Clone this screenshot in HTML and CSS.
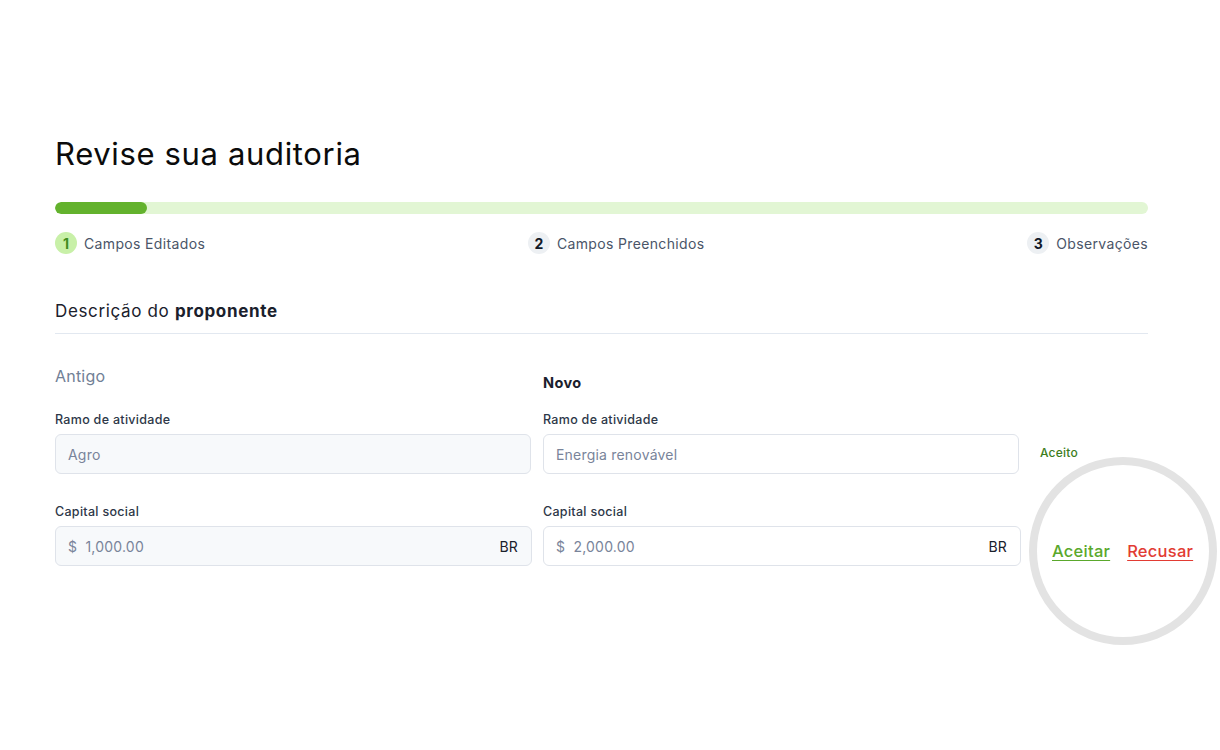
FILE: index.html
```html
<!DOCTYPE html>
<html lang="pt-BR">
<head>
<meta charset="utf-8">
<title>Revise sua auditoria</title>
<link rel="stylesheet" href="styles.css">
</head>
<body>
<main class="page">
  <h1 class="title">Revise sua auditoria</h1>
  <div class="progress"><div class="progress-fill"></div></div>
  <ol class="steps">
    <li class="step active"><span class="step-num">1</span><span class="step-label">Campos Editados</span></li>
    <li class="step"><span class="step-num">2</span><span class="step-label">Campos Preenchidos</span></li>
    <li class="step"><span class="step-num">3</span><span class="step-label">Observações</span></li>
  </ol>
  <h2 class="section-title">Descrição do <strong>proponente</strong></h2>
  <div class="compare">
    <div class="col-head old">Antigo</div>
    <div class="col-head new">Novo</div>
    <div class="col-head"></div>

    <div class="field">
      <label class="field-label">Ramo de atividade</label>
      <div class="input readonly narrow"><span class="value">Agro</span></div>
    </div>
    <div class="field">
      <label class="field-label">Ramo de atividade</label>
      <div class="input narrow"><span class="value">Energia renovável</span></div>
    </div>
    <div class="status"><span class="accepted">Aceito</span></div>

    <div class="field second">
      <label class="field-label">Capital social</label>
      <div class="input readonly"><span class="value">$&nbsp; 1,000.00</span><span class="suffix">BR</span></div>
    </div>
    <div class="field second">
      <label class="field-label">Capital social</label>
      <div class="input"><span class="value">$&nbsp; 2,000.00</span><span class="suffix">BR</span></div>
    </div>
    <div class="status second">
      <div class="actions">
        <a class="action accept" href="#">Aceitar</a>
        <a class="action reject" href="#">Recusar</a>
      </div>
    </div>
  </div>
</main>
</body>
</html>
```
FILE: styles.css
```css
*, *::before, *::after { box-sizing: border-box; }
html, body { margin: 0; padding: 0; background: #ffffff; }
body {
  font-family: "Inter", "Open Sans", "Liberation Sans", sans-serif;
  color: #1a202c;
  width: 1220px;
  height: 750px;
  overflow: hidden;
}
.page {
  padding: 134px 72px 0 55px;
}
.title {
  margin: 0;
  font-size: 31px;
  line-height: 40px;
  font-weight: 400;
  color: #0b0b0b;
  letter-spacing: 0.65px;
}
.progress {
  margin-top: 28px;
  height: 12px;
  border-radius: 6px;
  background: #e2f6d4;
  overflow: hidden;
}
.progress-fill {
  width: 92px;
  height: 100%;
  border-radius: 6px;
  background: #63b22d;
}
.steps {
  list-style: none;
  margin: 18px 0 0;
  padding: 0;
  display: flex;
  justify-content: space-between;
  height: 22px;
}
.step {
  display: flex;
  align-items: center;
  gap: 7px;
}
.step-num {
  width: 22px;
  height: 22px;
  border-radius: 50%;
  background: #edf0f3;
  color: #111827;
  font-weight: 700;
  font-size: 14px;
  display: flex;
  align-items: center;
  justify-content: center;
}
.step.active .step-num {
  background: #c8f0a8;
  color: #3f8d1e;
}
.step-label {
  font-size: 14px;
  color: #4a5568;
  letter-spacing: 0.35px;
}
.section-title {
  margin: 45px 0 0;
  padding-bottom: 10px;
  border-bottom: 1px solid #e2e8f0;
  font-size: 17px;
  line-height: 24px;
  font-weight: 400;
  color: #1a202c;
  letter-spacing: 0.65px;
}
.section-title strong { font-weight: 700; }
.compare {
  display: grid;
  grid-template-columns: 477px 478px 1fr;
  grid-template-rows: 77px auto auto;
  column-gap: 11px;
}
.col-head.old {
  margin-top: 31px;
  font-size: 16px;
  line-height: 22px;
  color: #718096;
  letter-spacing: 0.2px;
}
.col-head.new {
  margin-top: 39px;
  font-size: 14.5px;
  line-height: 20px;
  font-weight: 700;
  color: #1a202c;
  letter-spacing: 0.4px;
}
.field { display: flex; flex-direction: column; }
.field.second { margin-top: 29px; }
.field-label {
  font-size: 12.5px;
  line-height: 18px;
  font-weight: 500;
  color: #2d3748;
  margin-bottom: 5px;
  letter-spacing: 0.3px;
}
.input {
  height: 40px;
  border: 1px solid #dfe3ea;
  border-radius: 6px;
  background: #ffffff;
  display: flex;
  align-items: center;
  justify-content: space-between;
  padding: 0 13px 0 12px;
  font-size: 14px;
  letter-spacing: 0.2px;
}
.input.narrow { width: 476px; }
.input.readonly { background: #f7f9fb; }
.value { color: #79849a; }
.suffix { color: #1a202c; }
.status {
  padding-top: 30px;
  padding-left: 8px;
}
.accepted {
  font-size: 12px;
  line-height: 18px;
  font-weight: 500;
  color: #3c7d1c;
  letter-spacing: 0.2px;
}
.status.second {
  margin-top: 29px;
  padding-top: 28px;
  padding-left: 20px;
}
.actions {
  position: relative;
  display: flex;
  align-items: center;
  gap: 17px;
  height: 40px;
  width: max-content;
}
.actions::before {
  content: "";
  position: absolute;
  left: 50%;
  top: 50%;
  width: 188px;
  height: 188px;
  margin: -94px 0 0 -94px;
  border: 8px solid #e3e3e3;
  border-radius: 50%;
  pointer-events: none;
}
.action {
  position: relative;
  font-size: 16.5px;
  font-weight: 500;
  text-decoration: underline;
  text-decoration-thickness: 1px;
  text-underline-offset: 3px;
  letter-spacing: 0.25px;
}
.action.accept { color: #5aa82c; }
.action.reject { color: #e23b33; }
```
